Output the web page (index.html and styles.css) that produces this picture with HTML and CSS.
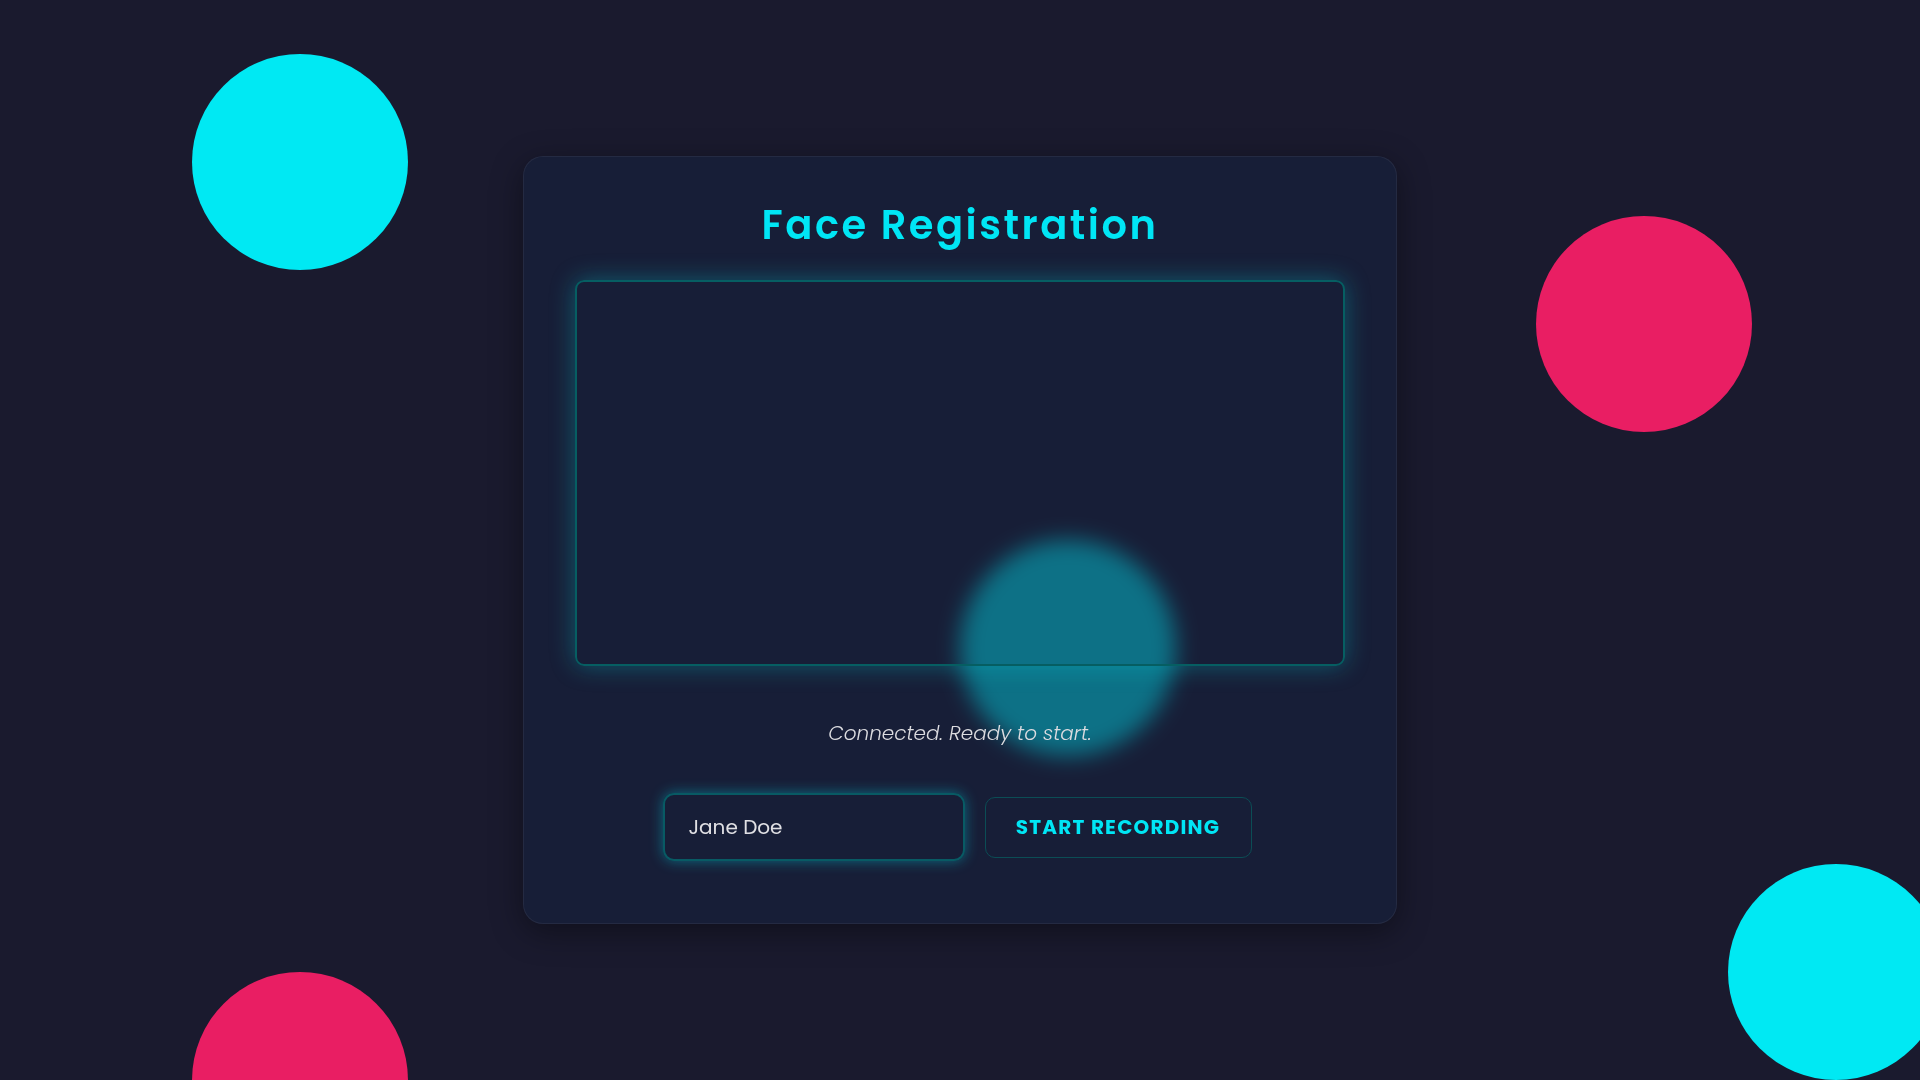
FILE: index.html
```html
<!DOCTYPE html>
<html lang="en">
<head>
<meta charset="utf-8">
<title>Face Registration</title>
<link rel="stylesheet" href="styles.css">
</head>
<body>
  <div class="shapes" aria-hidden="true">
    <span class="shape shape-1"></span>
    <span class="shape shape-2"></span>
    <span class="shape shape-3"></span>
    <span class="shape shape-4"></span>
    <span class="shape shape-5"></span>
  </div>

  <main class="card">
    <h1 class="title">Face Registration</h1>
    <div class="video-box"></div>
    <p class="status">Connected. Ready to start.</p>
    <div class="controls">
      <input class="name-input" type="text" value="Jane Doe" autofocus>
      <button class="record-btn" type="button">START RECORDING</button>
    </div>
  </main>
</body>
</html>
```

FILE: styles.css
```css
* {
  box-sizing: border-box;
}

html,
body {
  margin: 0;
  height: 100%;
}

body {
  background: #1a1a2e;
  font-family: Poppins, Inter, "Noto Sans", sans-serif;
  color: #e0e0e0;
  display: flex;
  align-items: center;
  justify-content: center;
  overflow: hidden;
  position: relative;
}

.shapes {
  position: absolute;
  inset: 0;
  z-index: 0;
  overflow: hidden;
}

.shape {
  position: absolute;
  width: 216px;
  height: 216px;
  border-radius: 50%;
}

.shape-1 { left: 10%; top: 5%; background: #00e9f3; }
.shape-2 { left: 80%; top: 20%; background: #e91e63; }
.shape-3 { left: 90%; top: 80%; background: #00e9f3; }
.shape-4 { left: 10%; top: 90%; background: #e91e63; }
.shape-5 { left: 50%; top: 50%; background: #00e9f3; }

.card {
  position: relative;
  z-index: 1;
  width: 874px;
  padding: 44px 51px 62px;
  background: rgba(22, 33, 62, 0.6);
  border: 1px solid rgba(255, 255, 255, 0.06);
  border-radius: 20px;
  box-shadow: 0 8px 32px rgba(0, 0, 0, 0.4);
  backdrop-filter: blur(11px);
  -webkit-backdrop-filter: blur(11px);
  display: flex;
  flex-direction: column;
  align-items: center;
}

.title {
  margin: 0 0 31px;
  font-size: 40px;
  line-height: 48px;
  font-weight: 600;
  letter-spacing: 2.5px;
  color: #00e6f5;
}

.video-box {
  width: 100%;
  height: 386px;
  border: 2px solid #065e62;
  border-radius: 9px;
  box-shadow: 0 0 24px rgba(0, 210, 220, 0.34);
}

.status {
  margin: 53px 0 0;
  font-size: 20px;
  line-height: 28px;
  font-style: italic;
  font-weight: 300;
  color: #dcdce0;
}

.controls {
  margin-top: 46px;
  display: flex;
  align-items: center;
  gap: 20px;
  padding-right: 6px;
}

.name-input {
  width: 302px;
  height: 68px;
  padding: 0 24px;
  font-family: inherit;
  font-size: 20px;
  color: #e0e0e4;
  background: transparent;
  border: 2px solid #085a64;
  border-radius: 11px;
  box-shadow: 0 0 14px rgba(0, 200, 220, 0.45);
  outline: none;
  caret-color: #e0e0e4;
}

.record-btn {
  width: 267px;
  height: 61px;
  padding: 0;
  font-family: inherit;
  font-size: 20px;
  font-weight: 700;
  letter-spacing: 1.2px;
  color: #00e6f5;
  background: transparent;
  border: 1px solid #0b4d55;
  border-radius: 10px;
  cursor: pointer;
}
```
